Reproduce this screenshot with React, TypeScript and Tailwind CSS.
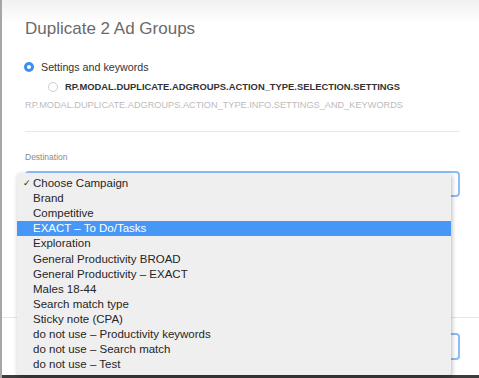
import React from "react";

const items = [
  "Choose Campaign",
  "Brand",
  "Competitive",
  "EXACT – To Do/Tasks",
  "Exploration",
  "General Productivity BROAD",
  "General Productivity – EXACT",
  "Males 18-44",
  "Search match type",
  "Sticky note (CPA)",
  "do not use – Productivity keywords",
  "do not use – Search match",
  "do not use – Test",
];

export default function App() {
  return (
    <div className="relative w-[479px] h-[378px] overflow-hidden bg-white font-['Liberation_Sans','DejaVu_Sans',sans-serif]">
      <div className="flex flex-col h-full border-l-2 border-[#a6a6a6] bg-[linear-gradient(to_bottom,#f1f1f1_0px,#ffffff_24px)]">
        {/* body */}
        <div className="flex-1 flex flex-col pl-[22px] pr-[19px] pt-[19px]">
          <div className="ml-px h-[20px] leading-[20px] text-[17px] text-[#6a6a6a]">
            Duplicate 2 Ad Groups
          </div>
          <div className="mt-[21px] h-[14px] flex items-center">
            <span className="w-[10px] h-[10px] rounded-full bg-[#3d8ef2] flex items-center justify-center">
              <span className="w-[4px] h-[4px] rounded-full bg-white" />
            </span>
            <span className="ml-[7px] text-[10.7px] text-[#333] font-medium">Settings and keywords</span>
          </div>
          <div className="mt-[6px] h-[14px] flex items-center pl-[24px]">
            <span className="w-[10px] h-[10px] rounded-full border border-[#cfcfcf] bg-white" />
            <span className="ml-[7px] text-[9.4px] font-bold text-[#333]">
              RP.MODAL.DUPLICATE.ADGROUPS.ACTION_TYPE.SELECTION.SETTINGS
            </span>
          </div>
          <div className="mt-[5px] h-[14px] flex items-center ml-px text-[9.2px] text-[#bcbcbc]">
            RP.MODAL.DUPLICATE.ADGROUPS.ACTION_TYPE.INFO.SETTINGS_AND_KEYWORDS
          </div>
          <div className="mt-[18px] ml-px h-px bg-[#e8e8e8]" />
          <div className="mt-[19px] ml-px h-[12px] leading-[12px] text-[8.5px] text-[#8a8a8a]">
            Destination
          </div>
          <div className="mt-[8px] ml-px h-[26px] rounded-[4px] border-2 border-[#8dbcf6] bg-white" />
        </div>
        {/* footer */}
        <div className="h-px bg-[#e6e6e6]" />
        <div className="flex justify-end pt-[15px] pb-[15px] pr-[19px] gap-2">
          <div className="w-[80px] h-[27px] rounded-[4px] border-2 border-[#8dbcf6] bg-white" />
        </div>
        <div className="h-[3px] bg-[#3c3c3c]" />
      </div>

      {/* native select popup */}
      <div className="absolute left-[17px] top-[173px] w-[434px] h-[202px] bg-[#efefef] rounded-[3px] shadow-[1px_2px_5px_rgba(0,0,0,0.28)] pt-[2.8px]">
        {items.map((label, i) => (
          <div
            key={label}
            className={
              i === 3
                ? "relative h-[15.15px] leading-[15.15px] pl-[16px] text-[11.5px] bg-[#4797f6] text-white"
                : "relative h-[15.15px] leading-[15.15px] pl-[16px] text-[11.5px] text-[#262626]"
            }
          >
            {i === 0 && (
              <span className="absolute left-[6px] top-0 text-[9px] text-[#222] font-['DejaVu_Sans',sans-serif]">✓</span>
            )}
            {label}
          </div>
        ))}
      </div>
    </div>
  );
}
